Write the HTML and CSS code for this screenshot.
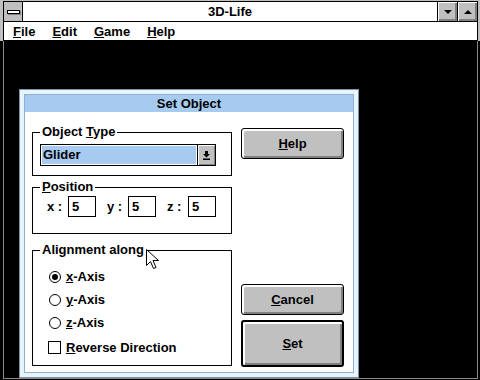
FILE: index.html
```html
<!DOCTYPE html>
<html>
<head>
<meta charset="utf-8">
<title>3D-Life</title>
<link rel="stylesheet" href="styles.css">
</head>
<body>
<div class="app">
  <div class="chrome">
    <div class="titlebar">
      <div class="sysmenu"><span class="sysbar"></span></div>
      <div class="title">3D-Life</div>
      <div class="sizebtn"><span class="tri-down"></span></div>
      <div class="sizebtn"><span class="tri-up"></span></div>
    </div>
    <div class="menubar">
      <span class="menu-item"><u>F</u>ile</span>
      <span class="menu-item"><u>E</u>dit</span>
      <span class="menu-item"><u>G</u>ame</span>
      <span class="menu-item"><u>H</u>elp</span>
    </div>
  </div>
  <div class="client">
    <div class="dialog">
      <div class="dialog-inner">
        <div class="dialog-title">Set Object</div>
        <div class="dialog-body">
          <div class="left-col">
            <div class="group group-type">
              <div class="group-label">Object <u>T</u>ype</div>
              <div class="combo">
                <div class="combo-field"><div class="combo-sel">Glider</div></div>
                <div class="combo-btn">
                  <svg width="7" height="9" viewBox="0 0 7 9"><path d="M2 0h3v3h2l-3.5 3.5L0 3h2z" fill="#000"/><rect x="0" y="7.5" width="7" height="1.5" fill="#000"/></svg>
                </div>
              </div>
            </div>
            <div class="group group-pos">
              <div class="group-label"><u>P</u>osition</div>
              <div class="pos-row">
                <div class="axis"><span class="axis-label">x :</span><span class="num">5</span></div>
                <div class="axis"><span class="axis-label">y :</span><span class="num">5</span></div>
                <div class="axis"><span class="axis-label">z :</span><span class="num">5</span></div>
              </div>
            </div>
            <div class="group group-align">
              <div class="group-label">Alignment along</div>
              <div class="opt"><span class="ind"><span class="radio checked"><span class="dot"></span></span></span><span><u>x</u>-Axis</span></div>
              <div class="opt"><span class="ind"><span class="radio"></span></span><span><u>y</u>-Axis</span></div>
              <div class="opt"><span class="ind"><span class="radio"></span></span><span><u>z</u>-Axis</span></div>
              <div class="opt opt-check"><span class="ind"><span class="check"></span></span><span><u>R</u>everse Direction</span></div>
            </div>
          </div>
          <div class="right-col">
            <div class="btn btn-help"><span><u>H</u>elp</span></div>
            <div class="spacer"></div>
            <div class="btn btn-cancel"><span><u>C</u>ancel</span></div>
            <div class="btn btn-set"><span><u>S</u>et</span></div>
          </div>
        </div>
      </div>
    </div>
  </div>
  <svg class="cursor" width="13" height="21" viewBox="0 0 13 21"><path d="M0.5 0.5V16.5L4.5 12.5L7.5 19.5L10 18.5L7 11.5H12.5Z" fill="#fff" stroke="#000" stroke-width="1"/></svg>
</div>
</body>
</html>
```
FILE: styles.css
```css
* { box-sizing: border-box; }
html, body { margin: 0; padding: 0; background: #000; }
body {
  font-family: "Liberation Sans", Arial, sans-serif;
  font-weight: bold;
  color: #000;
}
.app {
  position: relative;
  width: 480px;
  height: 380px;
  background: #000;
  display: flex;
  flex-direction: column;
  overflow: hidden;
}
.chrome {
  background: #c0c0c0;
  padding: 1px 2px 0 3px;
}
.titlebar {
  height: 21px;
  display: flex;
  background: #fff;
  border: 1px solid #000;
}
.sysmenu {
  width: 19px;
  background: #c0c0c0;
  border-right: 1px solid #000;
  display: flex;
  align-items: center;
  justify-content: center;
}
.sysbar {
  width: 13px;
  height: 4px;
  background: #fff;
  border: 1px solid #000;
  box-shadow: 1px 1px 0 #808080;
}
.title {
  flex: 1;
  text-align: center;
  font-size: 13px;
  line-height: 19px;
}
.sizebtn {
  width: 20px;
  border-left: 1px solid #000;
  background: #c0c0c0;
  box-shadow: inset 1px 1px 0 #fff, inset -1px -1px 0 #808080, inset -2px -2px 0 #808080;
  display: flex;
  align-items: center;
  justify-content: center;
}
.tri-down {
  width: 0; height: 0;
  border-left: 4px solid transparent;
  border-right: 4px solid transparent;
  border-top: 4px solid #000;
}
.tri-up {
  width: 0; height: 0;
  border-left: 4px solid transparent;
  border-right: 4px solid transparent;
  border-bottom: 4px solid #000;
}
.menubar {
  height: 19px;
  display: flex;
  gap: 17px;
  padding-left: 9px;
  background: #fff;
  border-left: 1px solid #000;
  border-right: 1px solid #000;
  border-bottom: 1px solid #000;
  font-size: 13px;
  line-height: 19px;
}
.client {
  flex: 1;
  margin: 0 2px 1px 3px;
  border-left: 1px solid #8a8a8a;
  border-right: 1px solid #8a8a8a;
  border-bottom: 1px solid #8a8a8a;
  background: #000;
  padding: 48px 0 0 15px;
}
.dialog {
  width: 340px;
  height: 289px;
  border: 1px solid #7d8fa3;
  background: #e6f5fd;
  padding: 4px;
}
.dialog-inner {
  height: 100%;
  border: 1px solid #8fb0cf;
  background: #fff;
  display: flex;
  flex-direction: column;
}
.dialog-title {
  height: 17px;
  background: #a6caf0;
  text-align: center;
  font-size: 13px;
  line-height: 17px;
}
.dialog-body {
  flex: 1;
  display: flex;
  gap: 9px;
  padding: 0 9px 5px 7px;
  font-size: 13px;
}
.left-col {
  width: 200px;
  padding-top: 20px;
}
.group {
  border: 1px solid #000;
}
.group-label {
  display: table;
  margin: -8px 0 0 7px;
  padding: 0 2px;
  background: #fff;
  line-height: 14px;
  height: 14px;
}
.group-type { padding-bottom: 9px; }
.group-pos { margin-top: 11px; padding-bottom: 16px; }
.group-align { margin-top: 16px; padding: 8px 0 6px 15px; }
.group-align .group-label { margin: -16px 0 8px -8px; }
.combo {
  margin: 5px 0 0 7px;
  width: 176px;
  height: 22px;
  border: 1px solid #000;
  display: flex;
  background: #fff;
}
.combo-field {
  flex: 1;
  padding: 1px;
}
.combo-sel {
  height: 100%;
  background: #a6caf0;
  padding-left: 1px;
  line-height: 18px;
}
.combo-btn {
  width: 18px;
  border-left: 1px solid #000;
  background: #c0c0c0;
  box-shadow: inset 1px 1px 0 #fff, inset -1px -1px 0 #808080;
  display: flex;
  align-items: center;
  justify-content: center;
}
.pos-row {
  display: flex;
  align-items: center;
  padding: 2px 0 0 14px;
  gap: 11px;
}
.axis {
  display: flex;
  align-items: center;
}
.axis-label {
  width: 21px;
}
.num {
  width: 28px;
  height: 21px;
  border: 1px solid #000;
  padding-left: 3px;
  line-height: 19px;
}
.opt {
  display: flex;
  align-items: center;
  height: 23px;
  gap: 5px;
}
.opt-check { margin-top: 2px; }
.ind {
  width: 13px;
  display: flex;
  align-items: center;
}
.radio {
  margin-left: 1px;
  width: 12px;
  height: 12px;
  border: 1px solid #000;
  border-radius: 50%;
  display: flex;
  align-items: center;
  justify-content: center;
}
.dot {
  width: 6px;
  height: 6px;
  border-radius: 50%;
  background: #000;
}
.check {
  width: 13px;
  height: 13px;
  border: 1px solid #000;
}
.right-col {
  width: 103px;
  display: flex;
  flex-direction: column;
  padding-top: 16px;
}
.spacer { flex: 1; }
.btn {
  border: 1px solid #000;
  border-radius: 3px;
  background: #c0c0c0;
  box-shadow: inset 2px 2px 0 #fff, inset -2px -2px 0 #808080;
  display: flex;
  align-items: center;
  justify-content: center;
  font-size: 13px;
}
.btn-help { height: 31px; }
.btn-cancel { height: 31px; }
.btn-set {
  height: 47px;
  margin-top: 5px;
  border-width: 2px;
}
.cursor {
  position: absolute;
  left: 146px;
  top: 249px;
}
```
